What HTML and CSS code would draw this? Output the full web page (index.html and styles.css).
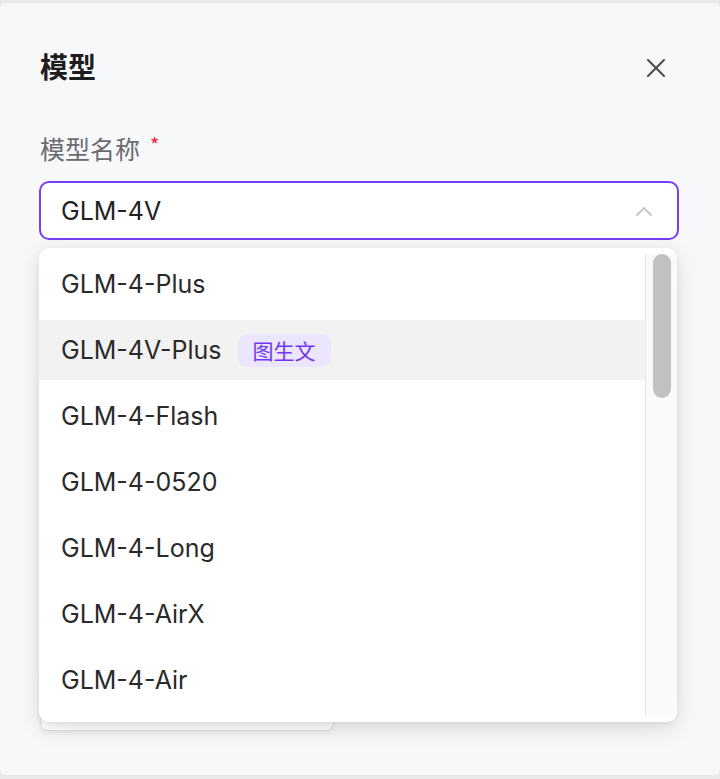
FILE: index.html
```html
<!DOCTYPE html>
<html>
	<head>
		<meta charset="UTF-8">
		<title>模型</title>
		<link rel="stylesheet" href="styles.css">
	</head>
	<body>
		<div class="modal">
			<div class="modal_head">
				<h2>模型</h2>
				<span class="close">
					<svg width="22" height="22" viewBox="0 0 22 22"><path d="M3 3L19 19M19 3L3 19" stroke="#4a4a4f" stroke-width="2" stroke-linecap="round"/></svg>
				</span>
			</div>
			<div class="field">
				<label class="label">模型名称<i>*</i></label>
				<div class="select_wrap">
					<div class="select">
						<span>GLM-4V</span>
						<svg class="arrow" width="18" height="10" viewBox="0 0 18 10"><path d="M2 9L9 2L16 9" fill="none" stroke="#c4c4c4" stroke-width="1.8" stroke-linecap="round"/></svg>
					</div>
					<div class="dropdown">
						<ul class="list">
							<li>GLM-4-Plus</li>
							<li class="hover">GLM-4V-Plus<span class="tag">图生文</span></li>
							<li>GLM-4-Flash</li>
							<li>GLM-4-0520</li>
							<li>GLM-4-Long</li>
							<li>GLM-4-AirX</li>
							<li>GLM-4-Air</li>
						</ul>
						<div class="bar"><span class="thumb"></span></div>
					</div>
				</div>
				<div class="under"></div>
			</div>
		</div>
	</body>
</html>
```

FILE: styles.css
```css
body,
ul,
li,
h2 {
    margin: 0;
    padding: 0;
}

ul {
    list-style: none;
}

body {
    background: #e9e9eb;
    font-family: Inter, "Noto Sans CJK SC", sans-serif;
}

.modal {
    margin-top: 3px;
    height: 772px;
    background: #f7f8fa;
    border-radius: 6px;
    padding: 0 41px 0 39px;
    box-sizing: border-box;
    overflow: hidden;
}

.modal_head {
    display: flex;
    align-items: center;
    justify-content: space-between;
    padding-top: 47px;
    height: 36px;
    box-sizing: content-box;
}

.modal_head h2 {
    font: bold 28px/36px Inter, "Noto Sans CJK SC", sans-serif;
    color: #1d1d1f;
    padding-left: 1px;
}

.close {
    display: flex;
    margin-right: 12px;
}

.label {
    display: block;
    margin-top: 46px;
    padding-left: 1px;
    font: 25px/32px "Noto Sans CJK SC", sans-serif;
    color: #6b6b70;
}

.label i {
    font-style: normal;
    color: #f5222d;
    font-size: 20px;
    margin-left: 10px;
    vertical-align: top;
    line-height: 26px;
}

.select_wrap {
    position: relative;
    margin-top: 17px;
}

.select {
    height: 59px;
    border: 2px solid #7340f7;
    border-radius: 10px;
    background: #fff;
    box-sizing: border-box;
    display: flex;
    align-items: center;
    justify-content: space-between;
    padding: 0 24px 0 20px;
    font-size: 25px;
    color: #222;
}

.under {
    width: 294px;
    height: 60px;
    margin-top: 431px;
    margin-left: 1px;
    background: #fff;
    border: 1px solid #e2e2e4;
    border-radius: 8px;
    box-sizing: border-box;
    box-shadow: 0 2px 4px rgba(0, 0, 0, 0.06);
}

.dropdown {
    position: absolute;
    top: 67px;
    left: 0;
    z-index: 2;
    width: 638px;
    height: 474px;
    background: #fff;
    border-radius: 10px;
    box-shadow: 0 6px 24px rgba(0, 0, 0, 0.12), 0 2px 6px rgba(0, 0, 0, 0.06);
    display: flex;
    overflow: hidden;
}

.list {
    flex: 1;
    display: flex;
    flex-direction: column;
    gap: 6px;
    padding: 6px 0;
}

.list li {
    height: 60px;
    display: flex;
    align-items: center;
    padding-left: 22px;
    font-size: 25px;
    color: #2a2a2a;
}

.list li.hover {
    background: #f2f2f2;
}

.tag {
    margin-left: 16px;
    height: 33px;
    padding: 0 15px;
    border-radius: 9px;
    background: #ebe5fd;
    color: #7237f2;
    font: 21px/33px "Noto Sans CJK SC", sans-serif;
}

.bar {
    width: 32px;
    margin: 6px 0;
    border-left: 1px solid #e6e6e6;
    background: #fafafa;
    box-sizing: border-box;
    padding-left: 7px;
}

.thumb {
    display: block;
    width: 18px;
    height: 144px;
    border-radius: 9px;
    background: #c1c1c1;
}
```
